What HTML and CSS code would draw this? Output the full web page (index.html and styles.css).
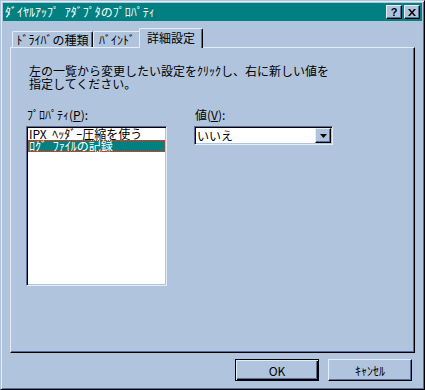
FILE: index.html
```html
<!doctype html>
<html lang="ja">
  <head>
    <meta charset="UTF-8" />
    <meta name="viewport" content="width=device-width, initial-scale=1.0" />
    <title>ﾀﾞｲﾔﾙｱｯﾌﾟ ｱﾀﾞﾌﾟﾀのﾌﾟﾛﾊﾟﾃｨ</title>
    <link rel="stylesheet" href="styles.css">
  </head>
  <body>
    <div class="window">
      <div class="titlebar">
        <span class="title">ﾀﾞｲﾔﾙｱｯﾌﾟ ｱﾀﾞﾌﾟﾀのﾌﾟﾛﾊﾟﾃｨ</span>
        <div class="title-buttons">
          <button class="tb-btn help">?</button>
          <button class="tb-btn close">
            <svg width="8" height="7" viewBox="0 0 8 7">
              <path d="M0 0h2l2 2.5L6 0h2L5 3.5 8 7H6L4 4.5 2 7H0l3-3.5z" fill="#000" />
            </svg>
          </button>
        </div>
      </div>

      <div class="content">
        <div class="tabs">
          <div class="tab tab-driver">ﾄﾞﾗｲﾊﾞの種類</div>
          <div class="tab tab-bind">ﾊﾞｲﾝﾄﾞ</div>
          <div class="tab active">詳細設定</div>
        </div>

        <div class="panel">
          <p class="hint">左の一覧から変更したい設定をｸﾘｯｸし、右に新しい値を<br>指定してください。</p>

          <div class="fields">
            <div class="field field-list">
              <label class="field-label">ﾌﾟﾛﾊﾟﾃｨ(<u>P</u>):</label>
              <ul class="listbox">
                <li>IPX ﾍｯﾀﾞｰ圧縮を使う</li>
                <li class="selected">ﾛｸﾞ ﾌｧｲﾙの記録</li>
              </ul>
            </div>
            <div class="field field-value">
              <label class="field-label">値(<u>V</u>):</label>
              <div class="combo">
                <span class="combo-text">いいえ</span>
                <span class="combo-arrow">
                  <svg width="7" height="4" viewBox="0 0 7 4">
                    <path d="M0 0h7L3.5 4z" fill="#000" />
                  </svg>
                </span>
              </div>
            </div>
          </div>
        </div>

        <div class="actions">
          <button class="btn default">OK</button>
          <button class="btn">ｷｬﾝｾﾙ</button>
        </div>
      </div>
    </div>
  </body>
</html>
```

FILE: styles.css
```css
body {
  margin: 0;
  padding: 0;
  background: #b0c4de;
  font-family: "Noto Sans CJK JP", "DejaVu Sans", sans-serif;
  font-size: 12px;
  word-spacing: 3px;
  color: #000;
}

.window {
  width: 425px;
  height: 390px;
  box-sizing: border-box;
  border: 1px solid;
  border-color: #b0c4de #000 #000 #b0c4de;
  box-shadow: inset 1px 1px 0 #e4ecf6, inset -1px -1px 0 #5a6c98;
  padding: 2px;
  display: flex;
  flex-direction: column;
  background: #b0c4de;
}

.titlebar {
  height: 18px;
  background: #008080;
  color: #fff;
  display: flex;
  align-items: center;
  justify-content: space-between;
  padding: 0 2px;
}

.title {
  line-height: 18px;
  white-space: nowrap;
}

.title-buttons {
  display: flex;
  gap: 2px;
}

.tb-btn {
  width: 16px;
  height: 14px;
  box-sizing: border-box;
  margin: 0;
  padding: 0;
  background: #b0c4de;
  border: 1px solid;
  border-color: #e4ecf6 #000 #000 #e4ecf6;
  box-shadow: inset -1px -1px 0 #5a6c98;
  display: flex;
  align-items: center;
  justify-content: center;
  font-family: "Liberation Sans", Arial, sans-serif;
  font-weight: bold;
  font-size: 11px;
  line-height: 12px;
  color: #000;
}

.content {
  flex: 1;
  display: flex;
  flex-direction: column;
  padding: 0 7px 6px 7px;
}

.tabs {
  margin-top: 7px;
  height: 19px;
  display: flex;
  align-items: flex-end;
  padding-left: 2px;
}

.tab {
  height: 16px;
  box-sizing: border-box;
  border-top: 1px solid #e4ecf6;
  border-left: 1px solid #e4ecf6;
  border-right: 1px solid #000;
  border-radius: 2px 2px 0 0;
  box-shadow: inset -1px 0 0 #5a6c98;
  text-align: center;
  line-height: 15px;
  white-space: nowrap;
}

.tab-driver {
  width: 81px;
}

.tab-bind {
  width: 48px;
}

.tab.active {
  position: relative;
  z-index: 1;
  width: 64px;
  height: 20px;
  margin: 0 -2px -1px -2px;
  background: #b0c4de;
  line-height: 15px;
  padding-top: 1px;
}

.panel {
  height: 306px;
  box-sizing: border-box;
  border: 1px solid;
  border-color: #e4ecf6 #000 #000 #e4ecf6;
  box-shadow: inset -1px -1px 0 #5a6c98;
  padding: 16px 0 0 15px;
}

.hint {
  margin: 0;
  padding-left: 3px;
  line-height: 13px;
  white-space: nowrap;
}

.fields {
  display: flex;
  gap: 27px;
  margin-top: 18px;
}

.field-list {
  width: 141px;
}

.field-value {
  width: 139px;
}

.field-label {
  display: block;
  padding-left: 1px;
  margin-bottom: 5px;
  line-height: 13px;
  white-space: nowrap;
}

.listbox {
  list-style: none;
  margin: 0;
  padding: 0;
  height: 160px;
  box-sizing: border-box;
  background: #fff;
  border: 1px solid;
  border-color: #5a6c98 #e4ecf6 #e4ecf6 #5a6c98;
  box-shadow: inset 1px 1px 0 #000, inset -1px -1px 0 #b0c4de;
  padding: 1px;
}

.listbox li {
  height: 12px;
  line-height: 12px;
  padding-left: 1px;
  white-space: nowrap;
}

.listbox li.selected {
  background: #008080;
  color: #fff;
  outline: 1px dotted #e04020;
  outline-offset: -1px;
}

.combo {
  height: 19px;
  box-sizing: border-box;
  background: #fff;
  border: 1px solid;
  border-color: #5a6c98 #e4ecf6 #e4ecf6 #5a6c98;
  box-shadow: inset 1px 1px 0 #000, inset -1px -1px 0 #b0c4de;
  padding: 1px;
  display: flex;
}

.combo-text {
  flex: 1;
  padding-left: 1px;
  line-height: 15px;
}

.combo-arrow {
  width: 16px;
  height: 15px;
  box-sizing: border-box;
  background: #b0c4de;
  border: 1px solid;
  border-color: #e4ecf6 #000 #000 #e4ecf6;
  box-shadow: inset -1px -1px 0 #5a6c98;
  display: flex;
  align-items: center;
  justify-content: center;
}

.actions {
  margin-top: 6px;
  display: flex;
  justify-content: flex-end;
  gap: 9px;
  padding-right: 3px;
}

.btn {
  width: 84px;
  height: 22px;
  box-sizing: border-box;
  margin: 0;
  padding: 0;
  background: #b0c4de;
  border: 1px solid;
  border-color: #e4ecf6 #000 #000 #e4ecf6;
  box-shadow: inset -1px -1px 0 #5a6c98;
  font-family: "Noto Sans CJK JP", "DejaVu Sans", sans-serif;
  font-size: 12px;
  color: #000;
}

.btn.default {
  border-color: #000;
  box-shadow: inset 1px 1px 0 #e4ecf6, inset -1px -1px 0 #000, inset -2px -2px 0 #5a6c98;
}
```
